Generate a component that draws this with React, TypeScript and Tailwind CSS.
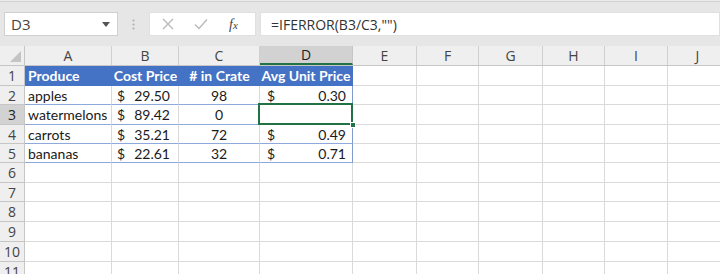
import React from "react";

const colW = [25, 87, 67, 81, 93, 64, 62, 64, 62, 63, 60];
const letters = ["A", "B", "C", "D", "E", "F", "G", "H", "I", "J"];
const rowH = [20, 19, 20, 19, 19, 20, 19, 20, 20, 20, 20];

type Row = { a: string; b: string; c: string; d: string };
const data: Row[] = [
  { a: "apples", b: "29.50", c: "98", d: "0.30" },
  { a: "watermelons", b: "89.42", c: "0", d: "" },
  { a: "carrots", b: "35.21", c: "72", d: "0.49" },
  { a: "bananas", b: "22.61", c: "32", d: "0.71" },
];

const font = { fontFamily: "Lato, 'Open Sans', sans-serif" };
const ui = { fontFamily: "'Open Sans', sans-serif" };

export default function App() {
  return (
    <div className="w-[720px] h-[274px] overflow-hidden bg-[#e6e6e6] relative" style={font}>
      {/* top strip */}
      <div className="h-[2px] border-b border-[#d2d2d2] bg-[#ececec]" />
      {/* formula bar */}
      <div className="h-[44px] flex items-start pt-[10px]">
        <div className="shrink-0 ml-[4px] w-[114px] h-[24px] bg-white border border-[#d0d0d0] flex items-center justify-between px-[6px]">
          <span className="text-[15px] text-[#444]" style={ui}>D3</span>
          <svg width="8" height="5" viewBox="0 0 8 5" className="mr-[1px]">
            <path d="M0 0 L8 0 L4 5 Z" fill="#555" />
          </svg>
        </div>
        <div className="shrink-0 w-[31px] h-[24px] flex items-center justify-center">
          <svg width="3" height="11" viewBox="0 0 3 11">
            <circle cx="1.5" cy="1.5" r="1.1" fill="#b0b0b0" />
            <circle cx="1.5" cy="5.5" r="1.1" fill="#b0b0b0" />
            <circle cx="1.5" cy="9.5" r="1.1" fill="#b0b0b0" />
          </svg>
        </div>
        <div className="shrink-0 w-[107px] h-[24px] bg-white border border-[#e0e0e0] flex items-center">
          <svg width="12" height="12" viewBox="0 0 12 12" className="ml-[12px]">
            <path d="M1 1 L11 11 M11 1 L1 11" stroke="#b8b8b8" strokeWidth="1.3" />
          </svg>
          <svg width="14" height="12" viewBox="0 0 14 12" className="ml-[20px]">
            <path d="M1 6.5 L5 10.5 L13 1.5" stroke="#b8b8b8" strokeWidth="1.3" fill="none" />
          </svg>
          <span className="ml-[21px] text-[14px] italic text-[#444]" style={{ fontFamily: "'Liberation Serif', serif" }}>
            f<span className="text-[11px]">x</span>
          </span>
        </div>
        <div className="ml-[4px] flex-1 h-[24px] bg-white border border-[#e0e0e0] flex items-center pl-[10px]">
          <span className="text-[14px] text-[#333] whitespace-nowrap" style={ui}>=IFERROR(B3/C3,"")</span>
        </div>
      </div>
      {/* column headers */}
      <div className="flex h-[20px] bg-[#efefef] border-b border-[#c6c6c6]">
        <div className="shrink-0 h-full border-r border-[#c6c6c6] relative" style={{ width: colW[0] }}>
          <svg width="11" height="11" viewBox="0 0 11 11" className="absolute right-[3px] bottom-[3px]">
            <path d="M11 0 L11 11 L0 11 Z" fill="#c4c4c4" />
          </svg>
        </div>
        {letters.map((l, i) => (
          <div
            key={l}
            className={
              "shrink-0 h-full flex items-center justify-center text-[14px] border-r " +
              (l === "D"
                ? "bg-[#d2d2d2] text-[#222] border-[#c6c6c6] border-b-2 border-b-[#217346]"
                : "text-[#444] border-[#d0d0d0]")
            }
            style={{ width: colW[i + 1], ...ui }}
          >
            {l}
          </div>
        ))}
      </div>
      {/* rows */}
      <div className="bg-white">
        {rowH.map((h, r) => {
          const rowNum = r + 1;
          return (
            <div key={r} className="flex" style={{ height: h }}>
              <div
                className={
                  "shrink-0 h-full flex items-center justify-center text-[14px] border-r border-b border-[#c6c6c6] " +
                  (rowNum === 3 ? "bg-[#d2d2d2] text-[#222]" : "bg-[#efefef] text-[#444]")
                }
                style={{ width: colW[0], ...ui }}
              >
                {rowNum}
              </div>
              {letters.map((l, c) => {
                const w = colW[c + 1];
                const inTable = rowNum <= 5 && c < 4;
                if (rowNum === 1 && c < 4) {
                  const labels = ["Produce", "Cost Price", "# in Crate", "Avg Unit Price"];
                  return (
                    <div
                      key={l}
                      className={
                        "shrink-0 h-full bg-[#4472c4] text-white font-bold text-[14px] whitespace-nowrap flex items-center border-b border-[#4472c4] " +
                        (c === 0 ? "justify-start pl-[3px] " : "justify-center ") +
                        (c === 3 ? "border-r border-r-[#4472c4]" : "")
                      }
                      style={{ width: w }}
                    >
                      {labels[c]}
                    </div>
                  );
                }
                if (inTable) {
                  const row = data[rowNum - 2];
                  let content: React.ReactNode = null;
                  if (c === 0) content = <span className="pl-[3px]">{row.a}</span>;
                  else if (c === 1)
                    content = (
                      <div className="flex w-full justify-between pl-[5px] pr-[8px]">
                        <span>$</span>
                        <span>{row.b}</span>
                      </div>
                    );
                  else if (c === 2) content = <div className="w-full text-center">{row.c}</div>;
                  else if (c === 3 && row.d)
                    content = (
                      <div className="flex w-full justify-between pl-[7px] pr-[6px]">
                        <span>$</span>
                        <span>{row.d}</span>
                      </div>
                    );
                  return (
                    <div
                      key={l}
                      className={
                        "shrink-0 h-full flex items-center text-[14px] text-[#1a1a1a] whitespace-nowrap border-b border-b-[#8ea9db] " +
                        (c === 3 ? "border-r border-r-[#7f9acb] " : "border-r border-r-[#d9d9d9] ") +
                        (rowNum === 3 && c === 3 ? "relative" : "")
                      }
                      style={{ width: w }}
                    >
                      {content}
                      {rowNum === 3 && c === 3 && (
                        <>
                          <div className="absolute left-[-2px] top-[-2px] right-[-1px] bottom-[-1px] border-2 border-[#217346]" />
                          <div className="absolute right-[-4px] bottom-[-4px] w-[6px] h-[6px] bg-[#217346] border border-white" />
                        </>
                      )}
                    </div>
                  );
                }
                return (
                  <div
                    key={l}
                    className="shrink-0 h-full border-r border-b border-[#dadada]"
                    style={{ width: w }}
                  />
                );
              })}
            </div>
          );
        })}
      </div>
    </div>
  );
}
